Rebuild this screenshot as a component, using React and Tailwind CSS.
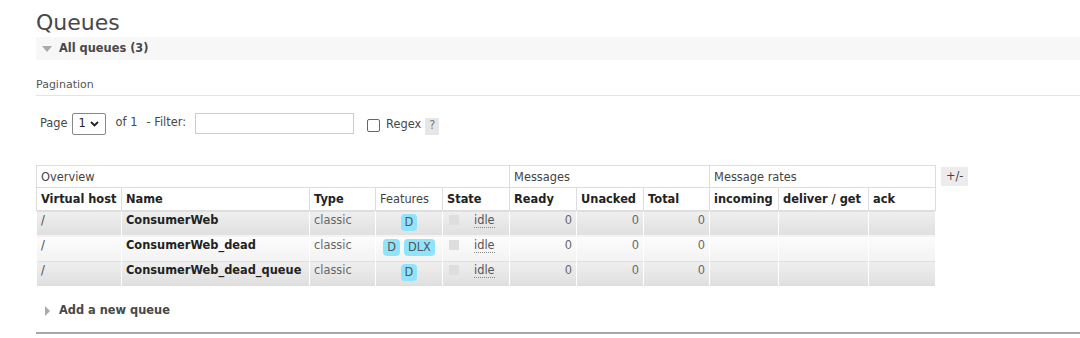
import React from 'react';

const queues = [
  { vhost: '/', name: 'ConsumerWeb', type: 'classic', features: ['D'] },
  { vhost: '/', name: 'ConsumerWeb_dead', type: 'classic', features: ['D', 'DLX'] },
  { vhost: '/', name: 'ConsumerWeb_dead_queue', type: 'classic', features: ['D'] },
];

function Badge({ children }) {
  return (
    <span className="inline-block rounded-[4px] bg-[#8fe4fb] px-[4px] leading-[17px] text-[#555]">
      {children}
    </span>
  );
}

export default function App() {
  const th = 'whitespace-nowrap border border-[#ddd] px-[4px] py-0 text-left align-middle';
  const td = 'whitespace-nowrap border-x border-white px-[4px] pt-[2px] align-top';

  return (
    <div
      className="min-h-[338px] bg-white pl-[36px] pt-[9px] text-[11.4px] text-[#484848]"
      style={{ fontFamily: '"DejaVu Sans", Verdana, sans-serif' }}
    >
      <h1 className="text-[22px] leading-[28px] font-normal text-[#484848]">Queues</h1>

      {/* All queues section */}
      <div className="flex h-[23px] items-center bg-[#f7f7f7] pl-[6px]">
        <svg width="10" height="6" viewBox="0 0 10 6" className="mr-[7px]">
          <path d="M0 0 L10 0 L5 6 Z" fill="#aaa" />
        </svg>
        <span className="font-bold text-[#484848]">All queues (3)</span>
      </div>

      <div className="mt-[18px] border-b border-[#e4e4e4] pb-[3px] text-[11px] leading-[14px] text-[#555]">
        Pagination
      </div>

      {/* Pagination controls */}
      <div className="mt-[17px] flex items-center pl-[4px]">
        <span>Page</span>
        <div className="ml-[4px] flex h-[22px] w-[34px] items-center justify-between rounded-[2px] border border-[#888] px-[6px]">
          <span className="text-[#222]">1</span>
          <svg width="9" height="6" viewBox="0 0 9 6">
            <path d="M1 1 L4.5 4.5 L8 1" stroke="#222" strokeWidth="1.8" fill="none" />
          </svg>
        </div>
        <span className="ml-[10px] -mt-[2px]">of 1</span>
        <span className="ml-[9px] -mt-[2px]">- Filter:</span>
        <div className="ml-[9px] h-[21px] w-[159px] -mt-[1px] border border-[#ccc]" />
        <div className="ml-[13px] mt-[2px] h-[13px] w-[13px] rounded-[2px] border border-[#666]" />
        <span className="ml-[6px] mt-[2px]">Regex</span>
        <span className="ml-[4px] mt-[4px] flex h-[17px] w-[14px] items-center justify-center bg-[#e6e6e6] text-[#777]">
          ?
        </span>
      </div>

      {/* Queues table */}
      <div className="mt-[30px] flex items-start">
        <table className="w-[899px] table-fixed border-collapse border border-[#ddd] leading-[14px]">
          <colgroup>
            <col className="w-[85px]" />
            <col className="w-[188px]" />
            <col className="w-[66px]" />
            <col className="w-[67px]" />
            <col className="w-[67px]" />
            <col className="w-[67px]" />
            <col className="w-[67px]" />
            <col className="w-[66px]" />
            <col className="w-[69px]" />
            <col className="w-[90px]" />
            <col className="w-[67px]" />
          </colgroup>
          <thead>
            <tr className="h-[22px]">
              <th colSpan={5} className={`${th} font-normal text-[#444]`}>Overview</th>
              <th colSpan={3} className={`${th} font-normal text-[#444]`}>Messages</th>
              <th colSpan={3} className={`${th} font-normal text-[#444]`}>Message rates</th>
            </tr>
            <tr className="h-[23px] font-bold text-[#222]">
              <th className={th}>Virtual host</th>
              <th className={th}>Name</th>
              <th className={th}>Type</th>
              <th className={`${th} font-normal text-[#444]`}>Features</th>
              <th className={th}>State</th>
              <th className={th}>Ready</th>
              <th className={th}>Unacked</th>
              <th className={th}>Total</th>
              <th className={th}>incoming</th>
              <th className={th}>deliver / get</th>
              <th className={th}>ack</th>
            </tr>
          </thead>
          <tbody>
            {queues.map((q, i) => (
              <tr
                key={q.name}
                className={`h-[25px] border-t border-[#f4f4f4] ${
                  i % 2 === 0
                    ? 'bg-gradient-to-b from-[#efefef] to-[#dfdfdf]'
                    : 'bg-gradient-to-b from-[#fcfcfc] to-[#f3f3f3]'
                }`}
              >
                <td className={td}>{q.vhost}</td>
                <td className={`${td} font-bold text-[#222]`}>{q.name}</td>
                <td className={`${td} text-[#666]`}>{q.type}</td>
                <td className={`${td} pt-[3px] pb-[2px] text-center`}>
                  <span className="inline-flex gap-[4px]">
                    {q.features.map((f) => (
                      <Badge key={f}>{f}</Badge>
                    ))}
                  </span>
                </td>
                <td className={td}>
                  <div className="flex items-start">
                    <span className="mt-[2px] ml-[2px] h-[10px] w-[10px] bg-[#dedede]" />
                    <span className="ml-[15px] border-b border-dotted border-[#888] leading-[14px] text-[#555]">
                      idle
                    </span>
                  </div>
                </td>
                <td className={`${td} text-right text-[#666]`}>0</td>
                <td className={`${td} text-right text-[#666]`}>0</td>
                <td className={`${td} text-right text-[#666]`}>0</td>
                <td className={td}></td>
                <td className={td}></td>
                <td className={td}></td>
              </tr>
            ))}
          </tbody>
        </table>
        <span className="ml-[5px] mt-[2px] flex h-[19px] w-[27px] items-center justify-center bg-[#ececec] text-[#444]">
          +/-
        </span>
      </div>

      {/* Add a new queue */}
      <div className="mt-[16px] flex items-center pl-[9px]">
        <svg width="5" height="10" viewBox="0 0 5 10" className="mr-[9px]">
          <path d="M0 0 L5 5 L0 10 Z" fill="#aaa" />
        </svg>
        <span className="font-bold text-[#484848]">Add a new queue</span>
      </div>

      <div className="mt-[13px] border-b-2 border-[#a8a8a8]" />
    </div>
  );
}
